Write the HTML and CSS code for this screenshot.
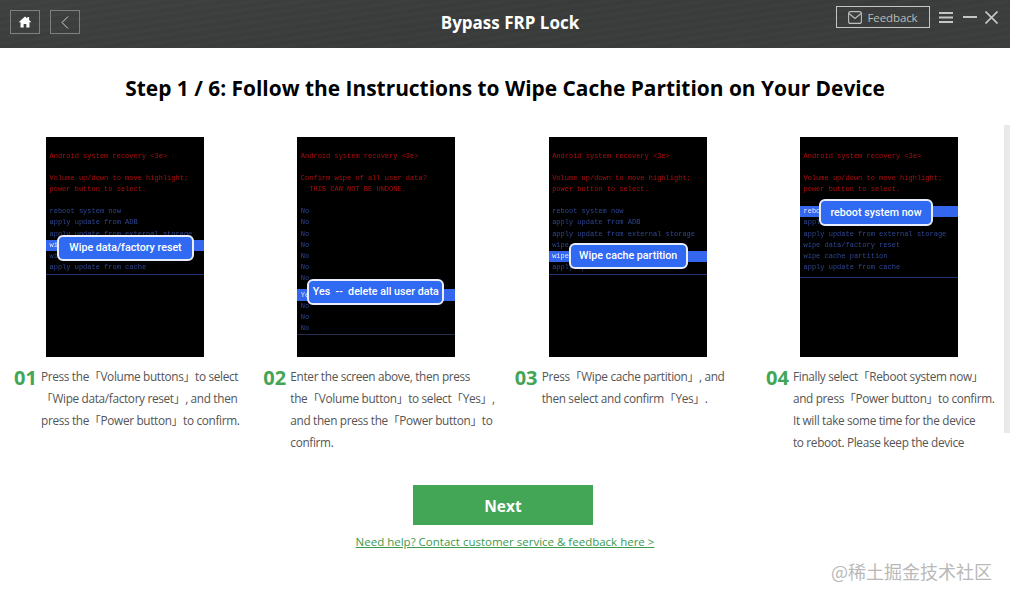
FILE: index.html
```html
<!DOCTYPE html>
<html>
<head>
<meta charset="utf-8">
<title>Bypass FRP Lock</title>
<link rel="stylesheet" href="styles.css">
</head>
<body>
    <header class="topbar">
        <div class="topbar-left">
            <button class="navbtn">
                <svg width="14" height="12" viewBox="0 0 16 14"><path d="M8 0.5L0.6 7.2H2.8V13.5H6.4V9.2H9.6V13.5H13.2V7.2H15.4L12.8 4.8V1.2H10.8V3L8 0.5Z" fill="#fff"/></svg>
            </button>
            <button class="navbtn">
                <svg width="8" height="13" viewBox="0 0 8 13"><path d="M7 0.5L1 6.5L7 12.5" fill="none" stroke="#d0d2d0" stroke-width="1"/></svg>
            </button>
        </div>
        <div class="topbar-title">Bypass FRP Lock</div>
        <div class="topbar-right">
            <button class="feedback">
                <svg width="14" height="13" viewBox="0 0 14 13"><rect x="0.6" y="0.6" width="12.8" height="11.8" rx="2" fill="none" stroke="#bdbfbd" stroke-width="1.1"/><path d="M1 2.5L7 7.5L13 2.5" fill="none" stroke="#bdbfbd" stroke-width="1.1"/></svg>
                Feedback
            </button>
            <svg class="winicon menu" width="14" height="11" viewBox="0 0 14 11"><path d="M0 1H14M0 5.5H14M0 10H14" stroke="#c4c6c4" stroke-width="2"/></svg>
            <svg class="winicon min" width="14" height="2" viewBox="0 0 14 2"><path d="M0 1H14" stroke="#c4c6c4" stroke-width="2"/></svg>
            <svg class="winicon close" width="13" height="13" viewBox="0 0 13 13"><path d="M0.5 0.5L12.5 12.5M12.5 0.5L0.5 12.5" stroke="#c4c6c4" stroke-width="1.7"/></svg>
        </div>
    </header>

    <h1 class="heading">Step 1 / 6: Follow the Instructions to Wipe Cache Partition on Your Device</h1>

    <div class="scrollthumb"></div>

    <section class="steps">
        <div class="step">
            <div class="phone">
                <div class="red">Android system recovery &lt;3e&gt;</div>
                <div class="red gap">Volume up/down to move highlight;</div>
                <div class="red">power button to select.</div>
                <div class="row first">reboot system now</div>
                <div class="row">apply update from ADB</div>
                <div class="row">apply update from external storage</div>
                <div class="row on">wi</div>
                <div class="row">wi</div>
                <div class="row">apply update from cache</div>
                <div class="rule"></div>
                <div class="callout callout-1">Wipe data/factory reset</div>
            </div>
            <div class="desc desc-first">
                <span class="num">01</span>
                <p>Press the「Volume buttons」to select<br>「Wipe data/factory reset」, and then<br>press the「Power button」to confirm.</p>
            </div>
        </div>

        <div class="step">
            <div class="phone">
                <div class="red">Android system recovery &lt;3e&gt;</div>
                <div class="red gap">Confirm wipe of all user data?</div>
                <div class="red">&nbsp;&nbsp;THIS CAN NOT BE UNDONE.</div>
                <div class="row first">No</div>
                <div class="row">No</div>
                <div class="row">No</div>
                <div class="row">No</div>
                <div class="row">No</div>
                <div class="row">No</div>
                <div class="row">No</div>
                <div class="row on yes">Ye</div>
                <div class="row">No</div>
                <div class="row">No</div>
                <div class="row">No</div>
                <div class="rule rule-dim"></div>
                <div class="callout callout-2">Yes &nbsp;--&nbsp; delete all user data</div>
            </div>
            <div class="desc">
                <span class="num">02</span>
                <p>Enter the screen above, then press<br>the「Volume button」to select「Yes」,<br>and then press the「Power button」to<br>confirm.</p>
            </div>
        </div>

        <div class="step">
            <div class="phone">
                <div class="red">Android system recovery &lt;3e&gt;</div>
                <div class="red gap">Volume up/down to move highlight;</div>
                <div class="red">power button to select.</div>
                <div class="row first">reboot system now</div>
                <div class="row">apply update from ADB</div>
                <div class="row">apply update from external storage</div>
                <div class="row">wipe</div>
                <div class="row on">wipe</div>
                <div class="row">apply update from cache</div>
                <div class="rule"></div>
                <div class="callout callout-3">Wipe cache partition</div>
            </div>
            <div class="desc">
                <span class="num">03</span>
                <p>Press「Wipe cache partition」, and<br>then select and confirm「Yes」.</p>
            </div>
        </div>

        <div class="step">
            <div class="phone">
                <div class="red">Android system recovery &lt;3e&gt;</div>
                <div class="red gap">Volume up/down to move highlight;</div>
                <div class="red">power button to select.</div>
                <div class="row first on">rebo</div>
                <div class="row">appl</div>
                <div class="row">apply update from external storage</div>
                <div class="row">wipe data/factory reset</div>
                <div class="row">wipe cache partition</div>
                <div class="row">apply update from cache</div>
                <div class="rule rule-low"></div>
                <div class="callout callout-4">reboot system now</div>
            </div>
            <div class="desc">
                <span class="num">04</span>
                <p>Finally select「Reboot system now」<br>and press「Power button」to confirm.<br>It will take some time for the device<br>to reboot. Please keep the device</p>
            </div>
        </div>
    </section>

    <div class="actions">
        <button class="next">Next</button>
        <a class="help" href="#">Need help? Contact customer service &amp; feedback here &gt;</a>
    </div>

    <div class="watermark">@稀土掘金技术社区</div>
</body>
</html>
```

FILE: styles.css
```css
html, body
{
    margin: 0;
    padding: 0;
    height: 600px;
    overflow: hidden;
    background: #fff;
}

body
{
    position: relative;
    font-family: "Open Sans", "Noto Sans CJK SC", sans-serif;
}

button
{
    font-family: inherit;
    cursor: pointer;
}

.topbar
{
    height: 48px;
    display: grid;
    grid-template-columns: minmax(0, 1fr) auto minmax(0, 1fr);
    background:
        repeating-linear-gradient(172deg, rgba(255, 255, 255, 0.012) 0 3px, rgba(0, 0, 0, 0.012) 3px 7px),
        linear-gradient(170deg, #3e413f 0%, #393c3a 45%, #3b3e3c 100%);
}

.topbar-left
{
    display: flex;
    gap: 10px;
    padding: 10px 0 0 10px;
}

.navbtn
{
    width: 30px;
    height: 24px;
    padding: 0;
    background: transparent;
    border: 1px solid #7d807d;
    display: flex;
    align-items: center;
    justify-content: center;
}

.topbar-title
{
    padding-left: 10px;
    color: #fff;
    font-size: 17px;
    font-weight: 700;
    line-height: 46px;
}

.topbar-right
{
    display: flex;
    justify-content: flex-end;
    align-items: flex-start;
    padding: 6px 12px 0 0;
}

.feedback
{
    width: 94px;
    height: 22px;
    padding: 0;
    background: transparent;
    border: 1px solid #c4c6c4;
    color: #b9bbb9;
    font-size: 11.5px;
    letter-spacing: -0.1px;
    display: flex;
    align-items: center;
    justify-content: center;
    gap: 5px;
}

.winicon.menu { margin: 6px 0 0 9px; }
.winicon.min { margin: 10px 0 0 10px; }
.winicon.close { margin: 5px 0 0 8px; }

.heading
{
    margin: 0;
    padding-top: 26px;
    height: 63px;
    box-sizing: border-box;
    text-align: center;
    color: #000;
    font-size: 20.9px;
    line-height: 29px;
    font-weight: 700;
}

.scrollthumb
{
    position: absolute;
    top: 125px;
    right: 0;
    width: 6px;
    height: 308px;
    background: #e9e9e9;
}

.steps
{
    margin-top: 26px;
    padding-left: 12px;
    height: 313px;
    overflow: hidden;
    display: grid;
    grid-template-columns: repeat(4, 251.33px);
}

.phone
{
    position: relative;
    width: 158px;
    height: 220px;
    margin-left: 34px;
    box-sizing: border-box;
    padding: 13.5px 0 0 3.5px;
    background: #000;
    font-family: "Liberation Mono", monospace;
    font-size: 7px;
    line-height: 11.2px;
    white-space: nowrap;
    overflow: hidden;
}

.red
{
    color: #b00c0c;
    filter: blur(0.3px);
}

.gap { margin-top: 11px; }

.row
{
    margin-left: -3.5px;
    padding-left: 3.5px;
    color: #2f4793;
    filter: blur(0.3px);
}

.row.first { margin-top: 11px; }

.row.on
{
    background: #3467ee;
    color: #e6ecff;
}

.row.yes
{
    margin-top: 4px;
    height: 12px;
    line-height: 12px;
}

.rule
{
    margin: 1px 0 0 -3.5px;
    height: 1px;
    background: #1f3277;
}

.rule-dim
{
    margin-top: 0;
    background: #24304f;
}

.rule-low { margin-top: 4px; }

.callout
{
    position: absolute;
    box-sizing: border-box;
    height: 26px;
    line-height: 22px;
    text-align: center;
    background: #3069f2;
    border: 2px solid #e8eefc;
    border-radius: 6px;
    color: #fff;
    font-family: Roboto, sans-serif;
    font-size: 10.7px;
    font-weight: 500;
}

.callout-1 { left: 11px; top: 98px; width: 137px; }
.callout-2 { left: 10px; top: 142px; width: 137px; }
.callout-3 { left: 20px; top: 105.5px; width: 119px; }
.callout-4 { left: 19px; top: 62px; width: 114px; height: 27px; line-height: 23px; }

.desc
{
    display: flex;
    gap: 4px;
    margin-top: 8px;
}

.desc-first { padding-left: 2px; }

.num
{
    flex: none;
    width: 23px;
    color: #43a556;
    font-size: 20px;
    font-weight: 700;
    line-height: 26px;
}

.desc p
{
    margin: 0;
    color: #555;
    font-size: 11.8px;
    letter-spacing: -0.33px;
    line-height: 22px;
    white-space: nowrap;
}

.actions
{
    margin-top: 35px;
    display: flex;
    flex-direction: column;
    align-items: center;
    gap: 8px;
}

.next
{
    width: 180px;
    height: 40px;
    margin-right: 4px;
    padding: 2px 0 0;
    border: none;
    background: #43a556;
    color: #fff;
    font-size: 15.5px;
    font-weight: 700;
}

.help
{
    color: #3b9a50;
    font-size: 11.5px;
    line-height: 17px;
}

.watermark
{
    position: absolute;
    top: 559px;
    right: 18px;
    color: #b9b9b9;
    font-size: 18px;
    line-height: 24px;
    font-family: "Noto Sans CJK SC", sans-serif;
}
```
